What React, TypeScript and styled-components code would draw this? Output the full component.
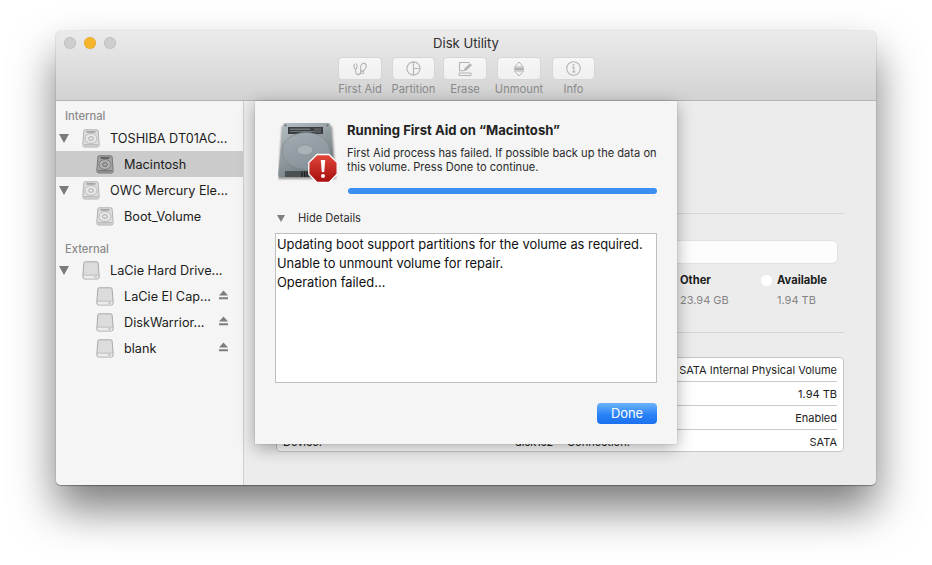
import React from 'react';
import styled, {createGlobalStyle} from 'styled-components';

const FONT = `Inter, Roboto, "Liberation Sans", sans-serif`;

const GlobalStyle = createGlobalStyle`
  html, body {
    margin: 0;
    padding: 0;
    background: #fff;
    font-family: ${FONT};
    -webkit-font-smoothing: antialiased;
  }
`;

const Page = styled.div`
  width: 932px;
  height: 565px;
  padding: 31px 56px 0;
  box-sizing: border-box;
  overflow: hidden;
`;

const Window = styled.div`
  width: 820px;
  height: 454px;
  border-radius: 5px;
  overflow: hidden;
  display: flex;
  flex-direction: column;
`;

const WindowShadow = styled.div`
  width: 820px;
  height: 454px;
  border-radius: 5px;
  box-shadow: 0 24px 44px rgba(0, 0, 0, 0.52), 0 0 1px rgba(0, 0, 0, 0.45), 0 1px 1px rgba(0, 0, 0, 0.3);
`;

const TitleBar = styled.header`
  height: 70px;
  flex: none;
  box-sizing: border-box;
  background: linear-gradient(180deg, #ebebeb 0%, #d2d2d2 100%);
  border-bottom: 1px solid #b4b4b4;
  display: flex;
  flex-direction: column;
  align-items: center;
  position: relative;
`;

const Lights = styled.div`
  position: absolute;
  left: 8px;
  top: 6px;
  display: flex;
  gap: 8px;
`;

const Light = styled.span<{$color: string}>`
  width: 12px;
  height: 12px;
  border-radius: 50%;
  background: ${p => p.$color};
  box-shadow: inset 0 0 0 0.5px rgba(0, 0, 0, 0.12);
`;

const Title = styled.div`
  font-size: 13.1px;
  line-height: 16px;
  margin-top: 4px;
  color: #2e2e2e;
`;

const Toolbar = styled.div`
  display: flex;
  margin-top: 6px;
  margin-left: 1px;
`;

const ToolCell = styled.div<{$cell: number}>`
  width: ${p => p.$cell}px;
  display: flex;
  flex-direction: column;
  align-items: flex-start;
`;

const ToolButton = styled.div<{$w: number}>`
  width: ${p => p.$w}px;
  height: 23px;
  box-sizing: border-box;
  border-radius: 4px;
  background: linear-gradient(180deg, #f6f6f6, #f0f0f0);
  border: 1px solid #d6d6d6;
  display: flex;
  align-items: center;
  justify-content: center;
`;

const ToolLabel = styled.div<{$w: number}>`
  width: ${p => p.$w}px;
  display: flex;
  justify-content: center;
  white-space: nowrap;
  font-size: 11.2px;
  line-height: 13px;
  margin-top: 3px;
  color: #8a8a8a;
`;

const Body = styled.div`
  flex: 1;
  display: flex;
  min-height: 0;
`;

const Sidebar = styled.aside`
  width: 188px;
  flex: none;
  box-sizing: border-box;
  background: #f5f5f5;
  border-right: 1px solid #cfcfcf;
`;

const SideHeader = styled.div<{$h: number; $pad: number}>`
  height: ${p => p.$h}px;
  box-sizing: border-box;
  padding: 0 0 ${p => p.$pad}px 9px;
  display: flex;
  align-items: flex-end;
  font-size: 11.2px;
  font-weight: 500;
  color: #8b8b8b;
`;

const SideRow = styled.div<{$child?: boolean; $selected?: boolean}>`
  height: 26px;
  display: flex;
  align-items: center;
  position: relative;
  padding-left: ${p => (p.$child ? 40 : 26)}px;
  background: ${p => (p.$selected ? '#cbcbcb' : 'transparent')};
  font-size: 12.7px;
  color: #1c1c1c;
`;

const RowName = styled.span`
  margin-left: 10px;
  white-space: nowrap;
`;

const Disclosure = styled.span`
  position: absolute;
  left: 3px;
  top: 9px;
  width: 0;
  height: 0;
  border-left: 5px solid transparent;
  border-right: 5px solid transparent;
  border-top: 9px solid #7b7b7b;
`;

const Eject = styled.svg`
  position: absolute;
  right: 15px;
  top: 7px;
`;

const Main = styled.main`
  flex: 1;
  min-width: 0;
  position: relative;
  background: #ececec;
  padding: 112px 32px 0 32px;
  box-sizing: border-box;
`;

const Rule = styled.div`
  height: 1px;
  background: #d6d6d6;
`;

const UsageBar = styled.div`
  height: 22px;
  margin: 27px 7px 0 0;
  border-radius: 5px;
  background: #fdfdfd;
  box-shadow: 0 0 0 1px #e2e2e2;
`;

const Legend = styled.div`
  display: flex;
  padding-left: 388px;
  margin-top: 10px;
  height: 59px;
`;

const LegendItem = styled.div<{$w: number}>`
  width: ${p => p.$w}px;
  display: grid;
  grid-template-columns: 10px auto;
  column-gap: 6px;
  align-content: start;
`;

const Dot = styled.span`
  width: 11px;
  height: 11px;
  border-radius: 50%;
  background: #fff;
  align-self: center;
`;

const LegendName = styled.div`
  font-size: 11.2px;
  line-height: 14px;
  font-weight: 700;
  color: #1d1d1d;
`;

const LegendValue = styled.div`
  grid-column: 2;
  margin-top: 7px;
  font-size: 11px;
  line-height: 13px;
  color: #858585;
`;

const InfoTable = styled.div`
  margin-top: 24px;
  height: 95px;
  box-sizing: border-box;
  background: #fff;
  border: 1px solid #c6c6c6;
  border-radius: 4px;
  padding: 0 6px;
`;

const InfoRow = styled.div<{$last?: boolean}>`
  height: 24px;
  box-sizing: border-box;
  display: flex;
  align-items: center;
  font-size: 11px;
  color: #222;
  border-bottom: ${p => (p.$last ? 'none' : '1px solid #c9c9c9')};
`;

const InfoValue = styled.span`
  margin-left: auto;
`;

const InfoLeft = styled.span`
  width: 232px;
`;

const InfoMid = styled.span`
  width: 52px;
  white-space: nowrap;
`;

const Sheet = styled.section`
  position: absolute;
  left: 11px;
  top: 0;
  width: 422px;
  height: 343px;
  box-sizing: border-box;
  background: #f5f5f5;
  box-shadow: 0 4px 16px rgba(0, 0, 0, 0.33), 0 0 1px rgba(0, 0, 0, 0.3);
  padding: 21px 20px 0 20px;
`;

const SheetHead = styled.div`
  display: flex;
  height: 72px;
`;

const SheetIconWrap = styled.div`
  width: 69px;
  margin-left: 3px;
  flex: none;
`;

const SheetCopy = styled.div`
  flex: 1;
  padding-right: 1px;
`;

const SheetTitle = styled.h1`
  margin: 0;
  font-size: 13.1px;
  line-height: 16px;
  font-weight: 700;
  color: #222;
`;

const SheetText = styled.p`
  margin: 8px 0 0;
  font-size: 11.1px;
  line-height: 14px;
  white-space: nowrap;
  color: #2a2a2a;
`;

const Progress = styled.div`
  height: 6px;
  margin: 14px 0 0 1px;
  border-radius: 3px;
  background: #3a8ff0;
`;

const DetailsToggle = styled.div`
  display: flex;
  align-items: center;
  height: 16px;
  margin-top: 16px;
  padding-left: 2px;
  font-size: 11.1px;
  color: #2e2e2e;
`;

const SmallTriangle = styled.span`
  width: 0;
  height: 0;
  margin-right: 13px;
  border-left: 4.5px solid transparent;
  border-right: 4.5px solid transparent;
  border-top: 7px solid #7f7f7f;
`;

const DetailsBox = styled.div`
  margin-top: 7px;
  height: 150px;
  box-sizing: border-box;
  background: #fff;
  border: 1px solid #bfbfbf;
  padding: 1px 1px;
  font-size: 12.9px;
  line-height: 19px;
  color: #111;
`;

const SheetFooter = styled.div`
  display: flex;
  justify-content: flex-end;
  margin-top: 20px;
`;

const DoneButton = styled.div`
  width: 60px;
  height: 21px;
  border-radius: 4px;
  background: linear-gradient(180deg, #6db3fb 0%, #2a83f6 55%, #1b70f0 100%);
  color: #fff;
  font-size: 12.9px;
  display: flex;
  align-items: center;
  justify-content: center;
`;

const ICON = '#b4b4b4';

const FirstAidIcon = () => (
    <svg width="16" height="14" viewBox="0 0 16 14" fill="none" stroke={ICON} strokeWidth="1.1">
        <path d="M4.2 1.2 Q5.8 4 4.6 6.4 Q3.6 8 2.6 6.4 Q1.4 4 2.4 2"/>
        <path d="M3.6 7.6 Q3.4 12.6 6.6 12.6 Q8.8 12.4 8.6 9 Q8.2 4.8 9.2 3 Q10.6 0.8 12.8 1.6 Q15 2.8 14 5.2 Q12.8 8 10.4 9.6"/>
        <circle cx="10.2" cy="10.2" r="1.5"/>
    </svg>
);

const PartitionIcon = () => (
    <svg width="17" height="17" viewBox="0 0 17 17" fill="none" stroke={ICON} strokeWidth="1.1">
        <circle cx="8.5" cy="8.5" r="6.6"/>
        <path d="M8.5 2 V15 M8.5 8.5 H15"/>
    </svg>
);

const EraseIcon = () => (
    <svg width="16" height="16" viewBox="0 0 16 16" fill="none" stroke={ICON} strokeWidth="1.1">
        <path d="M12.6 1.5 H2.5 V9.8 H7"/>
        <path d="M7.4 7.4 L13 2.2 L15 4.2 L9.4 9.6 L7 10 Z" fill={ICON} stroke="none"/>
        <path d="M2 12 H14 V14.5 H2 Z" strokeWidth="1"/>
    </svg>
);

const UnmountIcon = () => (
    <svg width="12" height="16" viewBox="0 0 12 16" fill="none" stroke={ICON} strokeWidth="1">
        <path d="M6 1 L10.5 6 H1.5 Z" />
        <path d="M1.5 7.1 H10.5 V8.9 H1.5 Z" fill={ICON}/>
        <path d="M1.5 10 H10.5 L6 15 Z"/>
    </svg>
);

const InfoIcon = () => (
    <svg width="17" height="17" viewBox="0 0 17 17" fill="none" stroke={ICON} strokeWidth="1.1">
        <circle cx="8.5" cy="8.5" r="6.8"/>
        <circle cx="8.5" cy="5" r="0.9" fill={ICON} stroke="none"/>
        <path d="M7 7.4 H8.9 V12 M7 12 H10.6"/>
    </svg>
);

const InternalDisk = ({dark}: {dark?: boolean}) => (
    <svg width="18" height="19" viewBox="0 0 18 19">
        <path d="M3 0.8 H15 Q16 0.8 16.1 2 L17.2 15.5 Q17.3 18 15.5 18 H2.5 Q0.7 18 0.8 15.5 L1.9 2 Q2 0.8 3 0.8 Z"
              fill={dark ? '#a4a4a4' : '#dddddd'} stroke={dark ? '#767676' : '#b2b2b2'}/>
        <rect x="4.5" y="2" width="9" height="1.8" fill={dark ? '#5c5c5c' : '#a6a6a6'}/>
        <ellipse cx="9" cy="9.5" rx="6" ry="5" fill={dark ? '#b0b0b0' : '#e6e6e6'} stroke={dark ? '#7a7a7a' : '#bcbcbc'}/>
        <ellipse cx="9" cy="9.5" rx="2.4" ry="1.8" fill="none" stroke={dark ? '#666' : '#a8a8a8'}/>
        <path d="M2 15.8 H16" stroke={dark ? '#777' : '#bbb'} strokeWidth="1.4"/>
    </svg>
);

const ExternalDisk = () => (
    <svg width="18" height="19" viewBox="0 0 18 19">
        <path d="M3.2 0.8 H14.8 Q16 0.8 16.1 2 L17.2 15.5 Q17.3 18 15.5 18 H2.5 Q0.7 18 0.8 15.5 L1.9 2 Q2 0.8 3.2 0.8 Z"
              fill="#dcdcdc" stroke="#a8a8a8"/>
        <path d="M1.4 14.2 H16.6" stroke="#b8b8b8"/>
        <path d="M1.8 14.8 H16.2 V16.6 Q16.2 17.4 15.4 17.4 H2.6 Q1.8 17.4 1.8 16.6 Z" fill="#ececec"/>
        <path d="M12 16 H15" stroke="#b0b0b0"/>
    </svg>
);

const EjectIcon = () => (
    <Eject width="9" height="10" viewBox="0 0 9 10">
        <path d="M4.5 0.5 L9 5.5 H0 Z M0 7.2 H9 V9.2 H0 Z" fill="#7d7d7d"/>
    </Eject>
);

const FailedDiskIcon = () => (
    <svg width="60" height="62" viewBox="0 0 60 62">
        <defs>
            <linearGradient id="metal" x1="0" y1="0" x2="0.6" y2="1">
                <stop offset="0" stopColor="#b7bfc3"/>
                <stop offset="0.5" stopColor="#939ea3"/>
                <stop offset="1" stopColor="#6b757a"/>
            </linearGradient>
            <linearGradient id="platter" x1="0" y1="0" x2="0.5" y2="1">
                <stop offset="0" stopColor="#a3adb2"/>
                <stop offset="1" stopColor="#87929a"/>
            </linearGradient>
            <linearGradient id="stop" x1="0" y1="0" x2="0" y2="1">
                <stop offset="0" stopColor="#e2483a"/>
                <stop offset="1" stopColor="#a50d0d"/>
            </linearGradient>
            <filter id="soft" x="-20%" y="-20%" width="140%" height="140%">
                <feGaussianBlur stdDeviation="1"/>
            </filter>
        </defs>
        <path d="M4 4 H54 L58 57 H0 Z" fill="#444" opacity="0.55" filter="url(#soft)"/>
        <path d="M6.5 1 H50.5 Q52 1 52.2 3 L57 52 Q57 55 54.5 55 H2.5 Q0.2 55 0.4 52 L5 3 Q5.2 1 6.5 1 Z" fill="url(#metal)"/>
        <rect x="10" y="5" width="35" height="7" fill="#3b3e41"/>
        <rect x="12" y="6.5" width="20" height="1.5" fill="#6f7579"/>
        <rect x="12" y="9" width="26" height="1" fill="#6f7579"/>
        <path d="M36 6 L43 6 L43 11 L36 11 Z" fill="#55595c"/>
        <ellipse cx="28" cy="29" rx="24" ry="18.5" fill="url(#platter)" stroke="#7b858a" strokeWidth="0.7"/>
        <ellipse cx="27" cy="28" rx="8" ry="5" fill="#a9b2b6" stroke="#7f898e" strokeWidth="0.5"/>
        <path d="M7 49 H32 V55 H7 Z" fill="#4b5053"/>
        <path d="M24 49.5 V55 M26.5 49.5 V55 M29 49.5 V55" stroke="#17191b" strokeWidth="1.1"/>
        <circle cx="7.5" cy="3.5" r="0.9" fill="#5d666a"/>
        <circle cx="49.5" cy="3.5" r="0.9" fill="#5d666a"/>
        <path d="M39 32.5 H51 L59.2 40.5 V52 L51 60.5 H39 L30.8 52 V40.5 Z"
              fill="url(#stop)" stroke="#fff" strokeWidth="1.3"/>
        <path d="M42.8 38 H47.2 L46.2 50 H43.8 Z" fill="#fff"/>
        <circle cx="45" cy="54" r="2" fill="#fff"/>
    </svg>
);

const tools = [
    {label: 'First Aid', icon: <FirstAidIcon/>, cell: 54, w: 44},
    {label: 'Partition', icon: <PartitionIcon/>, cell: 51, w: 43},
    {label: 'Erase', icon: <EraseIcon/>, cell: 54, w: 44},
    {label: 'Unmount', icon: <UnmountIcon/>, cell: 55, w: 44},
    {label: 'Info', icon: <InfoIcon/>, cell: 43, w: 43},
];

const App = () => (
    <>
        <GlobalStyle/>
        <Page>
            <WindowShadow>
                <Window>
                    <TitleBar>
                        <Lights>
                            <Light $color="#cdcdcd"/>
                            <Light $color="#f6b62c"/>
                            <Light $color="#cdcdcd"/>
                        </Lights>
                        <Title>Disk Utility</Title>
                        <Toolbar>
                            {tools.map(t => (
                                <ToolCell key={t.label} $cell={t.cell}>
                                    <ToolButton $w={t.w}>{t.icon}</ToolButton>
                                    <ToolLabel $w={t.w}>{t.label}</ToolLabel>
                                </ToolCell>
                            ))}
                        </Toolbar>
                    </TitleBar>
                    <Body>
                        <Sidebar>
                            <SideHeader $h={24} $pad={2}>Internal</SideHeader>
                            <SideRow><Disclosure/><InternalDisk/><RowName>TOSHIBA DT01AC...</RowName></SideRow>
                            <SideRow $child $selected><InternalDisk dark/><RowName>Macintosh</RowName></SideRow>
                            <SideRow><Disclosure/><InternalDisk/><RowName>OWC Mercury Ele...</RowName></SideRow>
                            <SideRow $child><InternalDisk/><RowName>Boot_Volume</RowName></SideRow>
                            <SideHeader $h={28} $pad={1}>External</SideHeader>
                            <SideRow><Disclosure/><ExternalDisk/><RowName>LaCie Hard Drive...</RowName></SideRow>
                            <SideRow $child><ExternalDisk/><RowName>LaCie El Cap...</RowName><EjectIcon/></SideRow>
                            <SideRow $child><ExternalDisk/><RowName>DiskWarrior...</RowName><EjectIcon/></SideRow>
                            <SideRow $child><ExternalDisk/><RowName>blank</RowName><EjectIcon/></SideRow>
                        </Sidebar>
                        <Main>
                            <Rule/>
                            <UsageBar/>
                            <Legend>
                                <LegendItem $w={97}>
                                    <span/>
                                    <LegendName>Other</LegendName>
                                    <LegendValue>23.94 GB</LegendValue>
                                </LegendItem>
                                <LegendItem $w={82}>
                                    <Dot/>
                                    <LegendName>Available</LegendName>
                                    <LegendValue>1.94 TB</LegendValue>
                                </LegendItem>
                            </Legend>
                            <Rule/>
                            <InfoTable>
                                <InfoRow><InfoValue>SATA Internal Physical Volume</InfoValue></InfoRow>
                                <InfoRow><InfoValue>1.94 TB</InfoValue></InfoRow>
                                <InfoRow><InfoValue>Enabled</InfoValue></InfoRow>
                                <InfoRow $last>
                                    <InfoLeft>Device:</InfoLeft>
                                    <InfoMid>disk1s2</InfoMid>
                                    <span>Connection:</span>
                                    <InfoValue>SATA</InfoValue>
                                </InfoRow>
                            </InfoTable>
                            <Sheet>
                                <SheetHead>
                                    <SheetIconWrap><FailedDiskIcon/></SheetIconWrap>
                                    <SheetCopy>
                                        <SheetTitle>Running First Aid on “Macintosh”</SheetTitle>
                                        <SheetText>
                                            First Aid process has failed. If possible back up the data on<br/>
                                            this volume. Press Done to continue.
                                        </SheetText>
                                        <Progress/>
                                    </SheetCopy>
                                </SheetHead>
                                <DetailsToggle><SmallTriangle/>Hide Details</DetailsToggle>
                                <DetailsBox>
                                    Updating boot support partitions for the volume as required.<br/>
                                    Unable to unmount volume for repair.<br/>
                                    Operation failed…
                                </DetailsBox>
                                <SheetFooter><DoneButton>Done</DoneButton></SheetFooter>
                            </Sheet>
                        </Main>
                    </Body>
                </Window>
            </WindowShadow>
        </Page>
    </>
);

export default App;
